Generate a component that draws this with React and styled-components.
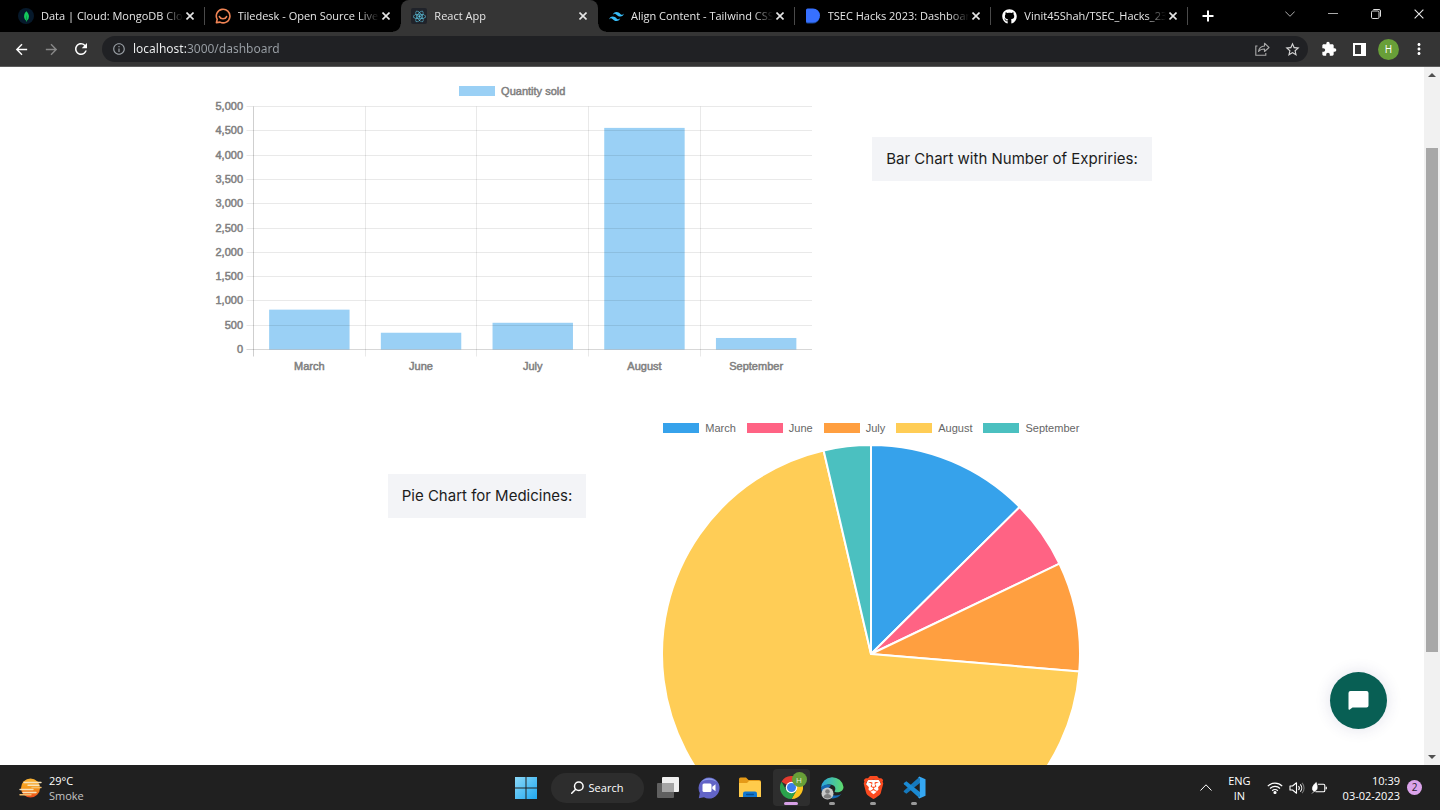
import { useState } from 'react';
import styled, { createGlobalStyle, css } from 'styled-components';
import { FaGithub, FaReact } from 'react-icons/fa';
import {
  MdArrowBack,
  MdArrowForward,
  MdExtension,
  MdInfoOutline,
  MdMoreVert,
  MdRefresh,
  MdStarBorder,
} from 'react-icons/md';
import { SiBrave, SiMongodb, SiTailwindcss } from 'react-icons/si';

const GlobalStyle = createGlobalStyle`
  * {
    box-sizing: border-box;
  }

  body {
    margin: 0;
    overflow: hidden;
    font-family: 'Open Sans', 'Noto Sans', sans-serif;
  }

  button {
    border: 0;
    padding: 0;
    background: none;
    color: inherit;
    font: inherit;
    cursor: pointer;
  }

  svg {
    display: block;
    flex: none;
  }
`;

const Screen = styled.div`
  display: flex;
  flex-direction: column;
  height: 100vh;
  background: #fff;
`;

/* ---------- browser tabs ---------- */

const TabStrip = styled.div`
  display: flex;
  height: 32px;
  padding-left: 8px;
  background: #000;
  color: #e6e6e6;
`;

const TabList = styled.div`
  display: flex;
  flex: 1;
  min-width: 0;
`;

const Tab = styled.div`
  position: relative;
  display: flex;
  flex: 1 1 0;
  align-items: center;
  min-width: 0;
  padding: 0 8px 0 10px;

  ${({ $divider }) =>
    $divider &&
    css`
      &::after {
        content: '';
        position: absolute;
        top: 7px;
        right: 0;
        width: 1px;
        height: 18px;
        background: #4a4a4a;
      }
    `}

  ${({ $active }) =>
    $active &&
    css`
      border-radius: 8px 8px 0 0;
      background: #353535;

      &::before,
      &::after {
        content: '';
        position: absolute;
        bottom: 0;
        width: 8px;
        height: 8px;
      }

      &::before {
        right: 100%;
        background: radial-gradient(circle at 0 0, transparent 7px, #353535 8px);
      }

      &::after {
        left: 100%;
        background: radial-gradient(circle at 100% 0, transparent 7px, #353535 8px);
      }
    `}
`;

const Favicon = styled.span`
  display: flex;
  align-items: center;
  justify-content: center;
  flex: none;
  width: 16px;
  height: 16px;
  margin-right: 7px;
  border-radius: ${({ $round }) => ($round ? '8px' : '2px')};
  background: ${({ $bg }) => $bg || 'none'};
  color: ${({ $color }) => $color || '#fff'};
`;

const TabTitle = styled.span`
  flex: 1;
  min-width: 0;
  overflow: hidden;
  font-size: 11px;
  line-height: 16px;
  white-space: nowrap;
  mask-image: linear-gradient(to left, transparent 0, #000 20px);
`;

const CloseTab = styled.button`
  display: flex;
  align-items: center;
  justify-content: center;
  width: 14px;
  height: 16px;
`;

const WindowControls = styled.div`
  display: flex;
  justify-content: flex-end;
  width: 252px;
`;

const WindowButton = styled.button`
  display: flex;
  align-items: center;
  justify-content: center;
  width: ${({ $wide }) => ($wide ? '43px' : '40px')};
  height: ${({ $wide }) => ($wide ? '28px' : '32px')};
  margin-right: ${({ $first }) => ($first ? 'auto' : '0')};
`;

/* ---------- address bar ---------- */

const Toolbar = styled.div`
  display: flex;
  align-items: center;
  height: 35px;
  padding: 0 6px;
  border-bottom: 1px solid #5c5c5c;
  background: #353535;
  color: #fff;
`;

const ToolButton = styled.button`
  display: flex;
  align-items: center;
  justify-content: center;
  width: 30px;
  height: 26px;
  color: ${({ $color }) => $color || '#fff'};
`;

const AddressBar = styled.div`
  display: flex;
  flex: 1;
  align-items: center;
  height: 26px;
  margin: 0 6px;
  padding: 0 1px 0 10px;
  border-radius: 13px;
  background: #202124;
  color: #9aa0a6;
`;

const UrlInput = styled.input`
  flex: 1;
  min-width: 0;
  height: 20px;
  margin-left: 7px;
  padding: 0;
  border: 0;
  outline: none;
  background: linear-gradient(to right, #f1f3f4 53px, #9aa0a6 53px);
  background-clip: text;
  -webkit-text-fill-color: transparent;
  color: #f1f3f4;
  font: 12px/20px 'Noto Sans', 'Open Sans', sans-serif;
`;

const ProfileButton = styled.button`
  width: 21px;
  height: 21px;
  margin: 0 5px 0 4px;
  border-radius: 50%;
  background: #689f38;
  color: #fff;
  font-size: 10px;
  line-height: 21px;
`;

/* ---------- dashboard ---------- */

const Viewport = styled.div`
  display: flex;
  flex: 1;
  min-height: 0;
`;

const Page = styled.main`
  position: relative;
  flex: 1;
  min-width: 0;
  padding-top: 14px;
  overflow: hidden;
`;

const ChartRow = styled.section`
  display: flex;
  align-items: flex-start;
  justify-content: center;
  gap: ${({ $pie }) => ($pie ? '75px' : '60px')};
  margin-bottom: 40px;
  padding: ${({ $pie }) => ($pie ? '0 0 0 45px' : '0 60px 0 0')};
`;

const ChartLabel = styled.h2`
  margin: 56px 0 0;
  padding: 0 14px;
  background: #f3f4f7;
  color: #1c1c1c;
  font: 400 15px/44px Inter, sans-serif;
  white-space: nowrap;
`;

const ChartColumn = styled.div`
  display: flex;
  flex-direction: column;
  flex: none;
`;

const Legend = styled.ul`
  display: flex;
  justify-content: center;
  gap: 11px;
  height: 20px;
  margin: 0;
  padding: 0;
  list-style: none;
  color: ${({ $bold }) => ($bold ? '#808080' : '#666')};
  font: 11px/20px 'Liberation Sans', Arial, sans-serif;
  -webkit-text-stroke: ${({ $bold }) => ($bold ? '0.5px #808080' : '0')};
`;

const LegendItem = styled.li`
  display: flex;
  align-items: center;
  gap: 6px;
`;

const Swatch = styled.span`
  width: 36px;
  height: 10px;
  background: ${({ $color }) => $color};
`;

const BarSvg = styled.svg`
  width: 600px;
  height: 277px;

  text {
    fill: #808080;
    stroke: #808080;
    stroke-width: 0.5px;
    font: 11px 'Liberation Sans', Arial, sans-serif;
  }
`;

const PieSvg = styled.svg`
  width: 420px;
  height: 420px;
  margin-top: 6px;
`;

const ChatButton = styled.button`
  position: absolute;
  right: 37px;
  bottom: 36px;
  display: flex;
  align-items: center;
  justify-content: center;
  width: 57px;
  height: 57px;
  border-radius: 50%;
  background: #085f54;
  box-shadow: 0 0 16px rgba(50, 50, 110, 0.14);
`;

const Scrollbar = styled.div`
  display: flex;
  flex-direction: column;
  align-items: center;
  width: 16px;
  background: #f1f1f1;
`;

const ScrollArrow = styled.div`
  display: flex;
  align-items: center;
  justify-content: center;
  height: 16px;
`;

const ScrollPart = styled.div`
  flex: ${({ $size }) => $size} 0 0;
  width: 12px;
  background: ${({ $thumb }) => ($thumb ? '#a8a8a8' : 'none')};
`;

/* ---------- taskbar ---------- */

const Taskbar = styled.footer`
  display: grid;
  grid-template-columns: 1fr auto 1fr;
  align-items: center;
  height: 45px;
  padding: 0 18px;
  background: #202020;
  color: #fff;
  font-size: 11px;
  line-height: 15px;
`;

const Weather = styled.div`
  display: flex;
  align-items: center;
  gap: 6px;
`;

const Muted = styled.div`
  color: #c4c4c4;
`;

const AppBar = styled.div`
  display: flex;
  align-items: center;
`;

const AppButton = styled.button`
  position: relative;
  display: flex;
  align-items: center;
  justify-content: center;
  width: 37px;
  height: 37px;
  margin: 0 2px;
  border-radius: 4px;
  background: ${({ $active }) => ($active ? '#2e2e2e' : 'none')};

  &::after {
    content: '';
    position: absolute;
    bottom: 1px;
    left: 50%;
    width: ${({ $active }) => ($active ? '14px' : '6px')};
    height: 3px;
    border-radius: 2px;
    background: ${({ $active }) => ($active ? '#d7a0e6' : '#9a9a9a')};
    transform: translateX(-50%);
    display: ${({ $active, $open }) => ($active || $open ? 'block' : 'none')};
  }
`;

const AppBadge = styled.span`
  position: absolute;
  top: 3px;
  right: 3px;
  width: 15px;
  height: 15px;
  border-radius: 50%;
  background: #689f38;
  color: #e4efd9;
  font-size: 8px;
  line-height: 15px;
  text-align: center;
`;

const SearchButton = styled.button`
  display: flex;
  align-items: center;
  justify-content: center;
  gap: 5px;
  width: 93px;
  height: 30px;
  margin: 0 4px;
  border-radius: 15px;
  background: #2d2d2d;
  font-size: 11px;
`;

const Tray = styled.div`
  display: flex;
  align-items: center;
  justify-content: flex-end;
  gap: 16px;
`;

const TrayIcons = styled.div`
  display: flex;
  gap: 6px;
`;

const Lang = styled.div`
  text-align: center;
`;

const Clock = styled.div`
  display: flex;
  align-items: center;
  gap: 7px;
  text-align: right;
`;

const NoticeBadge = styled.span`
  width: 15px;
  height: 15px;
  border-radius: 50%;
  background: #dba3ea;
  color: #2a2030;
  font-size: 10px;
  line-height: 15px;
  text-align: center;
`;

const sales = [
  { month: 'March', value: 820, color: '#36a2eb' },
  { month: 'June', value: 345, color: '#ff6384' },
  { month: 'July', value: 550, color: '#ff9f40' },
  { month: 'August', value: 4560, color: '#ffcd56' },
  { month: 'September', value: 237, color: '#4bc0c0' },
];

function Cross({ size = 8, width = 1.6 }) {
  return (
    <svg width={size} height={size} viewBox="0 0 8 8" stroke="currentColor" strokeWidth={width}>
      <path d="M0.5 0.5L7.5 7.5M7.5 0.5L0.5 7.5" />
    </svg>
  );
}

function TiledeskIcon() {
  return (
    <svg width="16" height="16" viewBox="0 0 16 16" fill="none" stroke="#ef8354" strokeWidth="1.6">
      <path d="M2.2 11.4A6.8 6.8 0 1 1 5 14.1L1.4 14.6Z" strokeLinejoin="round" />
      <path d="M4.4 8.6C5.6 11.4 10.4 11.4 11.6 8.6" strokeLinecap="round" />
    </svg>
  );
}

function DevfolioIcon() {
  return (
    <svg width="16" height="16" viewBox="0 0 16 16">
      <path d="M1 2.5V14Q1 15.600 2.600 15.600H7.500A7 7 0 0 0 14.600 9Z" fill="#1b4a9c" />
      <path d="M1 2Q1 0.500 2.500 0.500H8A7 7 0 0 1 8 14.500H2.500Q1 14.500 1 13Z" fill="#3770ff" />
    </svg>
  );
}

const tabs = [
  {
    title: 'Data | Cloud: MongoDB Clo',
    icon: <SiMongodb size={11} />,
    color: '#13c95b',
    bg: '#06192b',
    round: true,
    divider: true,
  },
  { title: 'Tiledesk - Open Source Live', icon: <TiledeskIcon /> },
  { title: 'React App', icon: <FaReact size={13} />, color: '#5fcbe8', bg: '#20232a' },
  {
    title: 'Align Content - Tailwind CSS',
    icon: <SiTailwindcss size={15} />,
    color: '#38bdf8',
    divider: true,
  },
  { title: 'TSEC Hacks 2023: Dashboar', icon: <DevfolioIcon />, divider: true },
  { title: 'Vinit45Shah/TSEC_Hacks_23', icon: <FaGithub size={15} />, divider: true },
];

function BrowserTabs({ active }) {
  return (
    <TabStrip>
      <TabList>
        {tabs.map((tab, i) => (
          <Tab key={tab.title} $active={i === active} $divider={tab.divider}>
            <Favicon $color={tab.color} $bg={tab.bg} $round={tab.round}>
              {tab.icon}
            </Favicon>
            <TabTitle>{tab.title}</TabTitle>
            <CloseTab aria-label="Close tab">
              <Cross />
            </CloseTab>
          </Tab>
        ))}
      </TabList>
      <WindowControls>
        <WindowButton $first aria-label="New tab">
          <svg width="12" height="12" viewBox="0 0 12 12" stroke="#fff" strokeWidth="2">
            <path d="M6 0.5V11.5M0.5 6H11.5" />
          </svg>
        </WindowButton>
        <WindowButton $wide aria-label="Search tabs">
          <svg width="10" height="6" viewBox="0 0 10 6" fill="none" stroke="#aaa">
            <path d="M0.3 0.500L5 5.3L9.7 0.500" />
          </svg>
        </WindowButton>
        <WindowButton $wide aria-label="Minimize">
          <svg width="10" height="2" viewBox="0 0 10 2" fill="#aaa">
            <rect y="0" width="10" height="1" />
          </svg>
        </WindowButton>
        <WindowButton $wide aria-label="Restore">
          <svg width="10" height="10" viewBox="0 0 10 10" fill="none" stroke="#ddd">
            <rect x="0.5" y="2" width="7.500" height="7.500" rx="1.200" />
            <path d="M2.300 0.500H8A1.500 1.500 0 0 1 9.500 2V7.700" />
          </svg>
        </WindowButton>
        <WindowButton $wide aria-label="Close">
          <Cross size={10} width={0.9} />
        </WindowButton>
      </WindowControls>
    </TabStrip>
  );
}

function BrowserToolbar() {
  const [url, setUrl] = useState('localhost:3000/dashboard');

  return (
    <Toolbar>
      <ToolButton aria-label="Back">
        <MdArrowBack size={17} />
      </ToolButton>
      <ToolButton aria-label="Forward" $color="#888">
        <MdArrowForward size={17} />
      </ToolButton>
      <ToolButton aria-label="Reload">
        <MdRefresh size={18} />
      </ToolButton>
      <AddressBar>
        <MdInfoOutline size={14} />
        <UrlInput aria-label="Address" value={url} onChange={(e) => setUrl(e.target.value)} />
        <ToolButton aria-label="Share" $color="#a8a8a8">
          <svg width="15" height="14" viewBox="0 0 15 14" fill="none" stroke="currentColor" strokeWidth="1.1">
            <path d="M2.500 4H0.800V13.200H10.800V11" />
            <path d="M3.500 9.500C4 6 6 4.200 9.500 4V1.200L14 5.500L9.500 9.500V7C7 7 5 7.600 3.500 9.500Z" strokeLinejoin="round" />
          </svg>
        </ToolButton>
        <ToolButton aria-label="Bookmark" $color="#d5d5d5">
          <MdStarBorder size={17} />
        </ToolButton>
      </AddressBar>
      <ToolButton aria-label="Extensions">
        <MdExtension size={16} />
      </ToolButton>
      <ToolButton aria-label="Side panel">
        <svg width="13" height="13" viewBox="0 0 13 13">
          <path d="M0 0H13V13H0ZM2 2V11H8V2Z" fill="#fff" fillRule="evenodd" />
        </svg>
      </ToolButton>
      <ProfileButton>H</ProfileButton>
      <ToolButton aria-label="Menu">
        <MdMoreVert size={18} />
      </ToolButton>
    </Toolbar>
  );
}

function BarChart() {
  const left = 41.5;
  const right = 600;
  const top = 5.5;
  const bottom = 248.5;
  const step = (right - left) / sales.length;
  const barWidth = step * 0.72;
  const yFor = (value) => bottom - ((bottom - top) * value) / 5000;
  const ticks = Array.from({ length: 11 }, (_, i) => i * 500);

  return (
    <ChartColumn>
      <Legend $bold>
        <LegendItem>
          <Swatch $color="#9ad0f5" />
          Quantity sold
        </LegendItem>
      </Legend>
      <BarSvg>
        {sales.map(({ month, value }, i) => {
          const center = left + step * (i + 0.5);
          const y = yFor(value);
          return (
            <g key={month}>
              <rect x={center - barWidth / 2} y={y} width={barWidth} height={bottom - y} fill="#9ad0f5" />
              <text x={center} y="269" textAnchor="middle">
                {month}
              </text>
            </g>
          );
        })}
        {ticks.map((tick) => {
          const y = Math.floor(yFor(tick)) + 0.5;
          return (
            <g key={tick}>
              <line x1={left - 7} x2={right} y1={y} y2={y} stroke={tick ? '#00000016' : '#00000028'} />
              <text x="31" y={y + 3} textAnchor="end">
                {tick.toLocaleString('en-US')}
              </text>
            </g>
          );
        })}
        {sales.map(({ month }, i) => {
          const x = Math.floor(left + step * i) + 0.5;
          return (
            <line key={month} x1={x} x2={x} y1={top} y2={bottom + 7} stroke={i ? '#00000016' : '#00000030'} />
          );
        })}
      </BarSvg>
    </ChartColumn>
  );
}

function PieChart() {
  const total = sales.reduce((sum, { value }) => sum + value, 0);
  const point = (amount) => {
    const angle = (amount / total) * Math.PI * 2;
    return `${210 + 209 * Math.sin(angle)} ${210 - 209 * Math.cos(angle)}`;
  };

  let start = 0;
  const slices = sales.map(({ month, value, color }) => {
    const large = value > total / 2 ? 1 : 0;
    const d = `M210 210L${point(start)}A209 209 0 ${large} 1 ${point(start + value)}Z`;
    start += value;
    return <path key={month} d={d} fill={color} />;
  });

  return (
    <ChartColumn>
      <Legend>
        {sales.map(({ month, color }) => (
          <LegendItem key={month}>
            <Swatch $color={color} />
            {month}
          </LegendItem>
        ))}
      </Legend>
      <PieSvg viewBox="0 0 420 420" stroke="#fff" strokeWidth="2" strokeLinejoin="round">
        {slices}
      </PieSvg>
    </ChartColumn>
  );
}

function WeatherIcon() {
  return (
    <svg width="25" height="22" viewBox="0 0 25 22">
      <defs>
        <linearGradient id="sun" x2="0" y2="1">
          <stop offset="0" stopColor="#f9b233" />
          <stop offset="0.5" stopColor="#f59a1c" />
          <stop offset="1" stopColor="#ec4a1c" />
        </linearGradient>
      </defs>
      <circle cx="12.500" cy="11" r="9.500" fill="url(#sun)" />
      <g stroke="#f6e3bb" strokeWidth="1.400" strokeLinecap="round">
        <path d="M6 5.500H23M10 8.300H21M2 12.500H15M5 15.500H18" />
        <path d="M14 10.500H23M2 17.800H13" stroke="#f3bd6a" />
      </g>
    </svg>
  );
}

function StartIcon() {
  return (
    <svg width="22" height="22" viewBox="0 0 22 22">
      <defs>
        <linearGradient id="win" x2="1" y2="1">
          <stop offset="0" stopColor="#8bd8f8" />
          <stop offset="1" stopColor="#1fa8f0" />
        </linearGradient>
      </defs>
      <path d="M0 0H10.500V10.500H0ZM11.500 0H22V10.500H11.500ZM0 11.500H10.500V22H0ZM11.500 11.500H22V22H11.500Z" fill="url(#win)" />
    </svg>
  );
}

function TaskViewIcon() {
  return (
    <svg width="24" height="21" viewBox="0 0 24 21">
      <rect x="6" y="0" width="17" height="15" rx="1" fill="#f0f0f0" />
      <rect x="1" y="6" width="17" height="15" rx="1" fill="#6c6c6c" fillOpacity="0.85" />
      <path d="M6 6H18V15H6Z" fill="#a5a5a5" />
    </svg>
  );
}

function TeamsChatIcon() {
  return (
    <svg width="22" height="22" viewBox="0 0 22 22">
      <path d="M11 0.500A10.500 10.500 0 1 1 6 20.200L0.800 21.200L1.800 16A10.500 10.500 0 0 1 11 0.500Z" fill="#6264c7" />
      <path d="M3 5A10.500 10.500 0 0 1 19 5Q11 0.500 3 5Z" fill="#8b9be6" />
      <rect x="4.500" y="6.500" width="9" height="8.500" rx="1.500" fill="#fff" />
      <path d="M14.300 9.800L17.500 7.300V14.300L14.300 11.800Z" fill="#fff" />
    </svg>
  );
}

function FolderIcon() {
  return (
    <svg width="24" height="21" viewBox="0 0 24 21">
      <path d="M1 2Q1 0.500 2.500 0.500H8L10.500 3H21Q23 3 23 5V12H1Z" fill="#e59a17" />
      <path d="M1 6H9L11 4H21.500Q23 4 23 5.500V20H1Z" fill="#ffcb4b" />
      <path d="M5 20V16.500Q5 14.500 7 14.500H17Q19 14.500 19 16.500V20Z" fill="#1177d0" />
      <rect x="8" y="16.800" width="8" height="1.500" rx="0.700" fill="#0a4e91" />
    </svg>
  );
}

function ChromeIcon() {
  return (
    <svg width="23" height="23" viewBox="0 0 24 24">
      <path d="M12 12L1.600 6A12 12 0 0 1 22.400 6H12Z" fill="#e33b2e" />
      <path d="M12 12L22.400 6A12 12 0 0 1 12 24L17.200 15Z" fill="#fcc31e" />
      <path d="M12 12L17.200 15L12 24A12 12 0 0 1 1.600 6L6.800 15Z" fill="#2ba24c" />
      <circle cx="12" cy="12" r="6" fill="#fff" />
      <circle cx="12" cy="12" r="4.700" fill="#3b7ded" />
    </svg>
  );
}

function EdgeIcon() {
  return (
    <svg width="24" height="24" viewBox="0 0 24 24">
      <defs>
        <linearGradient id="edge">
          <stop offset="0" stopColor="#2aa5e0" />
          <stop offset="1" stopColor="#5fdc6b" />
        </linearGradient>
      </defs>
      <path d="M1 12A11.300 11.300 0 0 1 23.500 11C23.500 16 17 17.500 14.500 15.500C17 12 14 8 9.500 8.500C5 8.500 2 11 1 12Z" fill="url(#edge)" />
      <path d="M1 12C3 8.500 8 7.500 11 9.500C6 13 9.500 20 16 19.500C18.500 19.500 20.500 18.500 21.500 17.500A11.300 11.300 0 0 1 1 12Z" fill="#1467b3" />
      <circle cx="7.500" cy="17.500" r="6" fill="#c9c9c9" />
      <circle cx="7.500" cy="15.500" r="2.300" fill="#7d7d7d" />
      <path d="M3.500 21A4.200 4.200 0 0 1 11.500 21A6 6 0 0 1 3.500 21Z" fill="#7d7d7d" />
    </svg>
  );
}

function BraveIcon() {
  return (
    <svg width="23" height="23" viewBox="0 0 24 24">
      <path d="M6 4H18L20 9L17 18L12 21L7 18L4 9Z" fill="#fff" />
      <SiBrave size={24} color="#fb4a1f" />
    </svg>
  );
}

function CodeIcon() {
  return (
    <svg width="23" height="23" viewBox="0 0 24 24">
      <path d="M17 1L18 7L3.500 18.500L1 16.800Q0.300 16 1 15.300Z" fill="#1579bd" />
      <path d="M17 23L18 17L3.500 5.500L1 7.200Q0.300 8 1 8.700Z" fill="#1b8ad3" />
      <path d="M17 0.500L23.500 3.500V20.500L17 23.500L15.500 22Q17.500 22.500 17.500 20V4Q17.500 1.500 15.500 2Z" fill="#35a7f2" />
    </svg>
  );
}

function DesktopTaskbar() {
  return (
    <Taskbar>
      <Weather>
        <WeatherIcon />
        <div>
          <div>29°C</div>
          <Muted>Smoke</Muted>
        </div>
      </Weather>
      <AppBar>
        <AppButton aria-label="Start">
          <StartIcon />
        </AppButton>
        <SearchButton>
          <svg width="13" height="13" viewBox="0 0 13 13" fill="none" stroke="#fff" strokeWidth="1.500">
            <circle cx="7.800" cy="5.200" r="4.300" />
            <path d="M4.700 8.300L0.700 12.300" strokeLinecap="round" />
          </svg>
          Search
        </SearchButton>
        <AppButton aria-label="Task view">
          <TaskViewIcon />
        </AppButton>
        <AppButton aria-label="Chat">
          <TeamsChatIcon />
        </AppButton>
        <AppButton aria-label="File Explorer">
          <FolderIcon />
        </AppButton>
        <AppButton $active aria-label="Chrome">
          <ChromeIcon />
          <AppBadge>H</AppBadge>
        </AppButton>
        <AppButton $open aria-label="Edge">
          <EdgeIcon />
        </AppButton>
        <AppButton $open aria-label="Brave">
          <BraveIcon />
        </AppButton>
        <AppButton $open aria-label="Visual Studio Code">
          <CodeIcon />
        </AppButton>
      </AppBar>
      <Tray>
        <svg width="12" height="7" viewBox="0 0 12 7" fill="none" stroke="#fff">
          <path d="M0.500 6.500L6 0.800L11.500 6.500" />
        </svg>
        <Lang>
          <div>ENG</div>
          <div>IN</div>
        </Lang>
        <TrayIcons>
          <svg width="16" height="16" viewBox="0 0 16 16" fill="none" stroke="#fff" strokeWidth="1.200">
            <path d="M0.800 6.200A10.200 10.200 0 0 1 15.200 6.200M3 8.500A7.100 7.100 0 0 1 13 8.500M5.200 10.700A4 4 0 0 1 10.800 10.700" />
            <circle cx="8" cy="12.500" r="1" fill="#fff" />
          </svg>
          <svg width="16" height="16" viewBox="0 0 16 16" fill="none" stroke="#fff" strokeWidth="1.100">
            <path d="M1 6H3.500L7.500 2.800V13.200L3.500 10H1Z" strokeLinejoin="round" />
            <path d="M9.500 6A3 3 0 0 1 9.500 10M11.300 4.300A5.500 5.500 0 0 1 11.300 11.700" />
            <path d="M13 2.800A7.500 7.500 0 0 1 13 13.200" stroke="#777" />
          </svg>
          <svg width="16" height="16" viewBox="0 0 16 16" fill="none" stroke="#fff" strokeWidth="1.100">
            <path d="M7 4.300H12.500Q13.800 4.300 13.800 5.500V10.500Q13.800 11.800 12.500 11.800H4.500M15.300 6.800V9.200" />
            <path d="M5.300 2.500C6.500 6 7 10.500 3.500 11.200C0.500 11 0.500 6 5.300 2.500ZM3.500 11L1 13.500" fill="#fff" strokeWidth="0.700" />
          </svg>
        </TrayIcons>
        <Clock>
          <div>
            <div>10:39</div>
            <div>03-02-2023</div>
          </div>
          <NoticeBadge>2</NoticeBadge>
        </Clock>
      </Tray>
    </Taskbar>
  );
}

export default function App() {
  return (
    <Screen>
      <GlobalStyle />
      <BrowserTabs active={2} />
      <BrowserToolbar />
      <Viewport>
        <Page>
          <ChartRow>
            <BarChart />
            <ChartLabel>Bar Chart with Number of Expriries:</ChartLabel>
          </ChartRow>
          <ChartRow $pie>
            <ChartLabel>Pie Chart for Medicines:</ChartLabel>
            <PieChart />
          </ChartRow>
          <ChatButton aria-label="Open chat">
            <svg width="21" height="19" viewBox="0 0 21 19" fill="#fff">
              <path d="M2.500 0H18.500Q20.500 0 20.500 2V14.500Q20.500 16.500 18.500 16.500H4.500L1.500 18.800Q0.500 19 0.500 18V2Q0.500 0 2.500 0Z" />
            </svg>
          </ChatButton>
        </Page>
        <Scrollbar>
          <ScrollArrow>
            <svg width="8" height="4" viewBox="0 0 8 4" fill="#505050">
              <path d="M0 4L4 0L8 4Z" />
            </svg>
          </ScrollArrow>
          <ScrollPart $size={65} />
          <ScrollPart $size={504} $thumb />
          <ScrollPart $size={97} />
          <ScrollArrow>
            <svg width="8" height="4" viewBox="0 0 8 4" fill="#505050">
              <path d="M0 0L4 4L8 0Z" />
            </svg>
          </ScrollArrow>
        </Scrollbar>
      </Viewport>
      <DesktopTaskbar />
    </Screen>
  );
}
